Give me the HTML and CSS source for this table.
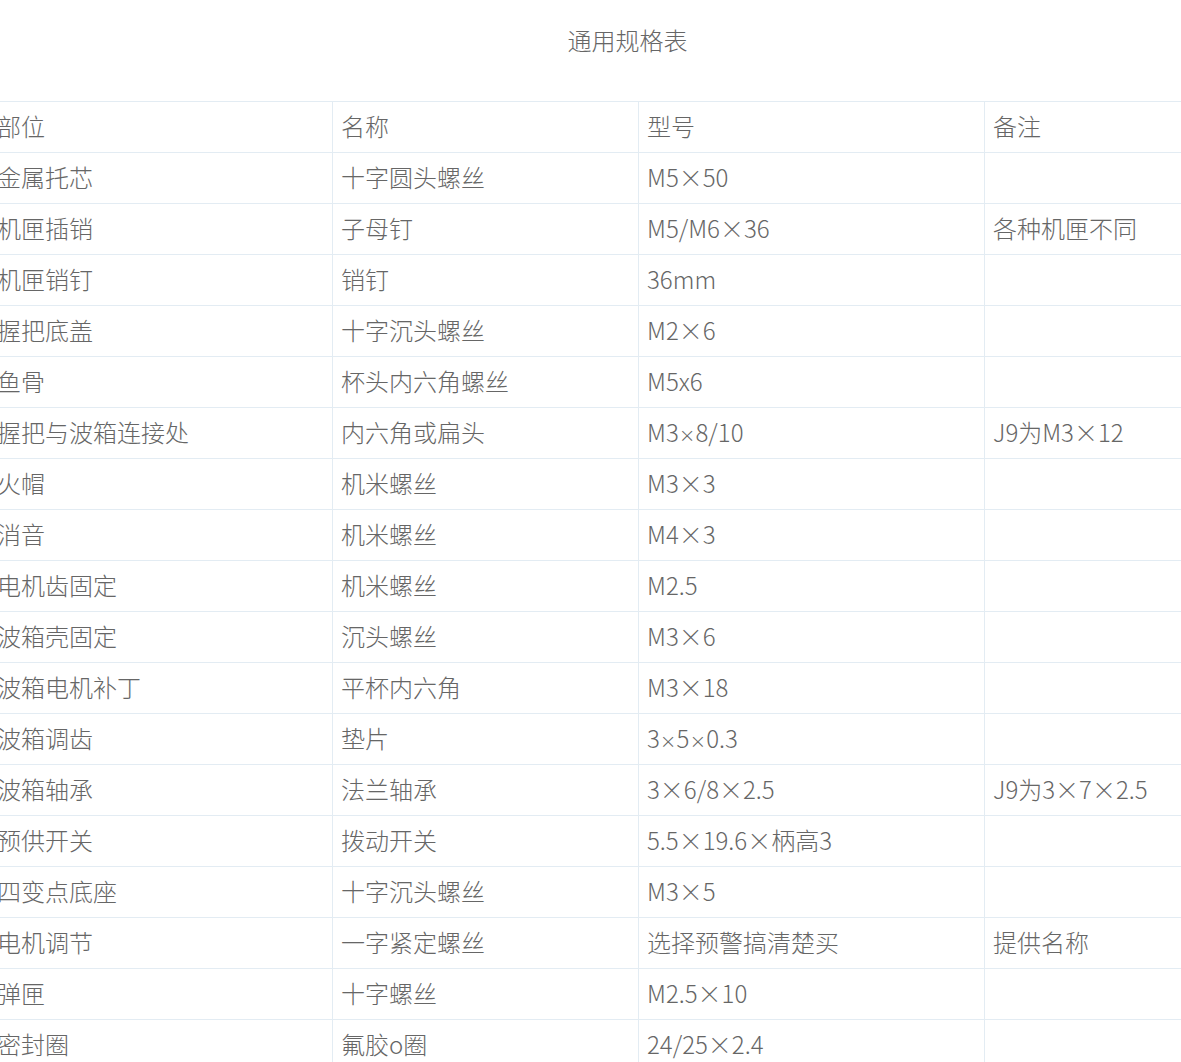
FILE: index.html
```html
<!DOCTYPE html>
<html lang="zh-CN">
<head>
<meta charset="utf-8">
<title>通用规格表</title>
<link rel="stylesheet" href="styles.css">
</head>
<body>
<div class="page">
  <div class="title">通用规格表</div>
  <table class="spec">
    <colgroup>
      <col class="c1"><col class="c2"><col class="c3"><col class="c4">
    </colgroup>
    <tbody>
      <tr><td>部位</td><td>名称</td><td>型号</td><td>备注</td></tr>
      <tr><td>金属托芯</td><td>十字圆头螺丝</td><td>M5×50</td><td></td></tr>
      <tr><td>机匣插销</td><td>子母钉</td><td>M5/M6×36</td><td>各种机匣不同</td></tr>
      <tr><td>机匣销钉</td><td>销钉</td><td>36mm</td><td></td></tr>
      <tr><td>握把底盖</td><td>十字沉头螺丝</td><td>M2×6</td><td></td></tr>
      <tr><td>鱼骨</td><td>杯头内六角螺丝</td><td>M5x6</td><td></td></tr>
      <tr><td>握把与波箱连接处</td><td>内六角或扁头</td><td>M3<span class="x">×</span>8/10</td><td>J9为M3×12</td></tr>
      <tr><td>火帽</td><td>机米螺丝</td><td>M3×3</td><td></td></tr>
      <tr><td>消音</td><td>机米螺丝</td><td>M4×3</td><td></td></tr>
      <tr><td>电机齿固定</td><td>机米螺丝</td><td>M2.5</td><td></td></tr>
      <tr><td>波箱壳固定</td><td>沉头螺丝</td><td>M3×6</td><td></td></tr>
      <tr><td>波箱电机补丁</td><td>平杯内六角</td><td>M3×18</td><td></td></tr>
      <tr><td>波箱调齿</td><td>垫片</td><td>3<span class="x">×</span>5<span class="x">×</span>0.3</td><td></td></tr>
      <tr><td>波箱轴承</td><td>法兰轴承</td><td>3×6/8×2.5</td><td>J9为3×7×2.5</td></tr>
      <tr><td>预供开关</td><td>拨动开关</td><td>5.5×19.6×柄高3</td><td></td></tr>
      <tr><td>四变点底座</td><td>十字沉头螺丝</td><td>M3×5</td><td></td></tr>
      <tr><td>电机调节</td><td>一字紧定螺丝</td><td>选择预警搞清楚买</td><td>提供名称</td></tr>
      <tr><td>弹匣</td><td>十字螺丝</td><td>M2.5×10</td><td></td></tr>
      <tr><td>密封圈</td><td>氟胶o圈</td><td>24/25×2.4</td><td></td></tr>
    </tbody>
  </table>
</div>
</body>
</html>
```
FILE: styles.css
```css
html, body {
  margin: 0;
  padding: 0;
  background: #fff;
}
body {
  font-family: "Noto Sans CJK SC", "Noto Sans", sans-serif;
  color: #666;
  overflow: hidden;
}
.page {
  width: 1279px;
  margin-left: -12px;
}
.title {
  height: 79px;
  line-height: 79px;
  text-align: center;
  font-size: 24px;
  font-weight: 300;
  margin-bottom: 22px;
}
.spec {
  width: 1279px;
  border-collapse: collapse;
  table-layout: fixed;
  font-size: 24px;
  font-weight: 300;
}
.c1 { width: 344px; }
.c2 { width: 306px; }
.c3 { width: 346px; }
.c4 { width: 283px; }
.spec td {
  border: 1px solid #e3ecf3;
  height: 51px;
  padding: 0 8px 2px;
  box-sizing: border-box;
  vertical-align: middle;
  white-space: nowrap;
  line-height: 1;
}
.x {
  font-family: "DejaVu Sans", sans-serif;
  font-size: 20px;
}
```
